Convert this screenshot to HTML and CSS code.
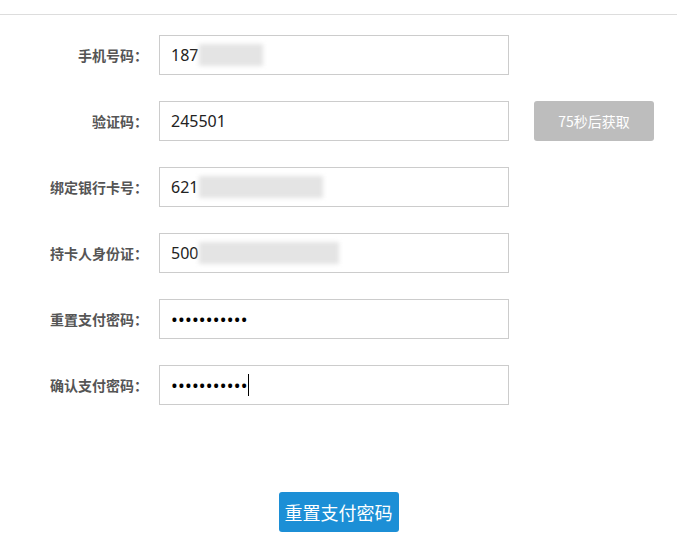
FILE: index.html
```html
<!DOCTYPE html>
<html lang="zh-CN">
<head>
    <meta charset="UTF-8">
    <title>重置支付密码</title>
    <link rel="stylesheet" href="styles.css">
</head>
<body>
    <div class="top-line"></div>

    <form class="reset-form">
        <div class="form-row">
            <label class="form-label">手机号码：</label>
            <div class="field">187<span class="masked masked-short"></span></div>
        </div>

        <div class="form-row">
            <label class="form-label">验证码：</label>
            <div class="field">245501</div>
            <button type="button" class="code-btn" disabled>75秒后获取</button>
        </div>

        <div class="form-row">
            <label class="form-label">绑定银行卡号：</label>
            <div class="field">621<span class="masked masked-card"></span></div>
        </div>

        <div class="form-row">
            <label class="form-label">持卡人身份证：</label>
            <div class="field">500<span class="masked masked-id"></span></div>
        </div>

        <div class="form-row">
            <label class="form-label">重置支付密码：</label>
            <div class="field password">•••••••••••</div>
        </div>

        <div class="form-row">
            <label class="form-label">确认支付密码：</label>
            <div class="field password">•••••••••••<span class="caret"></span></div>
        </div>

        <div class="submit-row">
            <button type="button" class="submit-btn">重置支付密码</button>
        </div>
    </form>
</body>
</html>
```

FILE: styles.css
```css
/* Base */
body {
    margin: 0;
    background: #fff;
    font-family: "Noto Sans", "Noto Sans CJK SC", sans-serif;
    color: #333;
}

.top-line {
    height: 14px;
    border-bottom: 1px solid #ddd;
}

/* Form */
.reset-form {
    padding-top: 20px;
}

.form-row {
    display: flex;
    align-items: center;
    height: 40px;
    margin-bottom: 26px;
}

.form-label {
    width: 148px;
    text-align: right;
    font-family: "Noto Sans CJK SC", sans-serif;
    font-size: 14px;
    font-weight: bold;
    color: #555;
}

.field {
    box-sizing: border-box;
    width: 350px;
    height: 40px;
    margin-left: 11px;
    padding: 0 11px;
    border: 1px solid #ccc;
    display: flex;
    align-items: center;
    font-size: 16px;
    color: #222;
}

/* blurred-out digits */
.masked {
    height: 22px;
    margin-left: 1px;
    background: #e4e4e4;
    filter: blur(2px);
}

.masked-short { width: 64px; }
.masked-card { width: 124px; }
.masked-id { width: 140px; }

.password {
    font-size: 18px;
    letter-spacing: 0.2px;
    color: #000;
}

.caret {
    width: 1px;
    height: 22px;
    background: #000;
}

/* Buttons */
.code-btn {
    width: 120px;
    height: 40px;
    margin-left: 25px;
    border: none;
    border-radius: 3px;
    background: #bdbdbd;
    color: #fff;
    font-family: "Noto Sans CJK SC", sans-serif;
    font-size: 14px;
}

.submit-row {
    display: flex;
    justify-content: center;
    padding-top: 61px;
}

.submit-btn {
    width: 120px;
    height: 40px;
    padding: 0;
    border: none;
    border-radius: 3px;
    background: #1c8fd6;
    color: #fff;
    font-family: "Noto Sans CJK SC", sans-serif;
    font-size: 18px;
    cursor: pointer;
}
```
